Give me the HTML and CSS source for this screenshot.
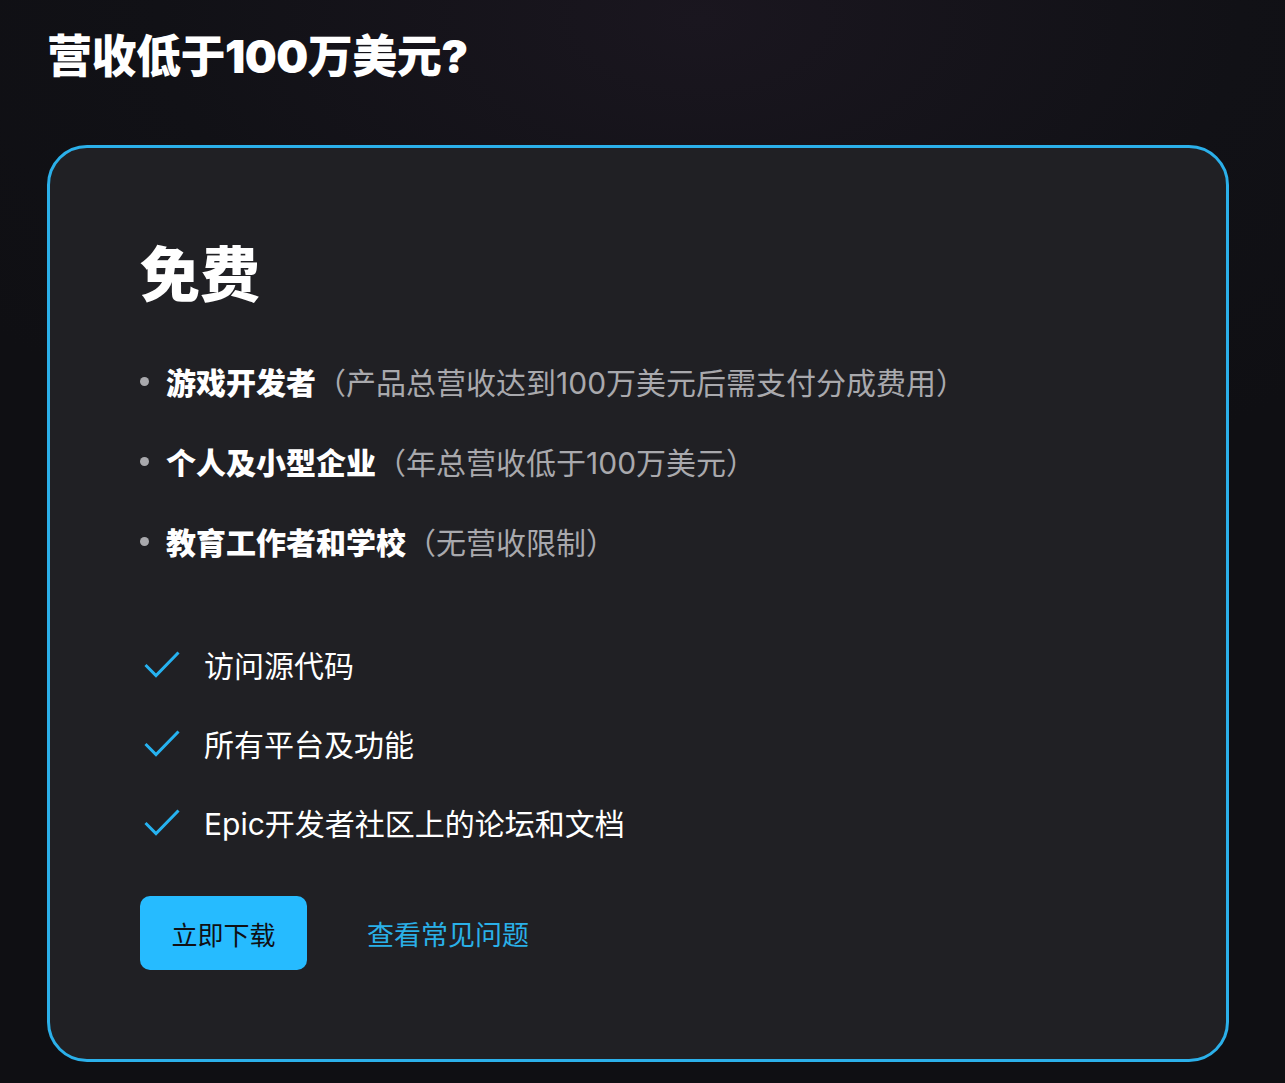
FILE: index.html
```html
<!DOCTYPE html>
<html lang="zh-CN">
<head>
<meta charset="utf-8">
<link rel="stylesheet" href="styles.css">
</head>
<body>
<main class="page">
  <h2 class="title">营收低于100万美元?</h2>
  <section class="card">
    <h3 class="plan">免费</h3>
    <ul class="who">
      <li><strong>游戏开发者</strong><span class="note">（产品总营收达到100万美元后需支付分成费用）</span></li>
      <li><strong>个人及小型企业</strong><span class="note">（年总营收低于100万美元）</span></li>
      <li><strong>教育工作者和学校</strong><span class="note">（无营收限制）</span></li>
    </ul>
    <ul class="features">
      <li><svg class="check" viewBox="0 0 36 28" width="36" height="28"><path d="M1.5 15 L12 25.5 L34.5 2.5" fill="none" stroke="#26b2f0" stroke-width="3"/></svg><span>访问源代码</span></li>
      <li><svg class="check" viewBox="0 0 36 28" width="36" height="28"><path d="M1.5 15 L12 25.5 L34.5 2.5" fill="none" stroke="#26b2f0" stroke-width="3"/></svg><span>所有平台及功能</span></li>
      <li><svg class="check" viewBox="0 0 36 28" width="36" height="28"><path d="M1.5 15 L12 25.5 L34.5 2.5" fill="none" stroke="#26b2f0" stroke-width="3"/></svg><span>Epic开发者社区上的论坛和文档</span></li>
    </ul>
    <div class="actions">
      <a class="btn">立即下载</a>
      <a class="link">查看常见问题</a>
    </div>
  </section>
</main>
</body>
</html>
```
FILE: styles.css
```css
html, body {
  margin: 0;
  padding: 0;
}
body {
  width: 1285px;
  height: 1083px;
  overflow: hidden;
  background: radial-gradient(ellipse 900px 500px at 700px 20px, #1a161f 0%, #111116 60%, #0f0f13 100%);
  font-family: "Inter", "Noto Sans CJK SC", sans-serif;
  color: #fff;
}
.page {
  padding: 26px 56px 0 47px;
}
.title {
  margin: 0;
  font-size: 45px;
  font-weight: 900;
  line-height: 62px;
  letter-spacing: -0.5px;
}
.card {
  margin-top: 57px;
  border: 3px solid #2bb0ea;
  border-radius: 40px;
  background: #202024;
  height: 917px;
  box-sizing: border-box;
  padding: 77px 90px 0 90px;
}
.plan {
  margin: 0;
  font-size: 60px;
  font-weight: 900;
  line-height: 100px;
}
.who {
  list-style: none;
  margin: 16px 0 0 0;
  padding: 0;
}
.who li {
  display: flex;
  align-items: center;
  height: 80px;
  font-size: 30px;
  color: #fff;
}
.who li::before {
  content: "";
  width: 9px;
  height: 9px;
  border-radius: 50%;
  background: #a9a9ad;
  margin: 0 17px 0 0;
  flex: none;
}
.who strong {
  font-weight: 900;
}
.note {
  color: #a9a9ad;
  font-weight: 400;
}
.features {
  list-style: none;
  margin: 43px 0 0 0;
  padding: 0;
}
.features li {
  display: flex;
  align-items: center;
  height: 79px;
  font-size: 30px;
  color: #fff;
}
.check {
  flex: none;
  margin: 0 24px 0 4px;
}
.actions {
  display: flex;
  align-items: center;
  margin-top: 35px;
}
.btn {
  display: flex;
  align-items: center;
  justify-content: center;
  width: 167px;
  height: 74px;
  border-radius: 10px;
  background: #26bbff;
  color: #101014;
  font-size: 26px;
}
.link {
  margin-left: 60px;
  color: #2ab0e8;
  font-size: 27px;
}
```
